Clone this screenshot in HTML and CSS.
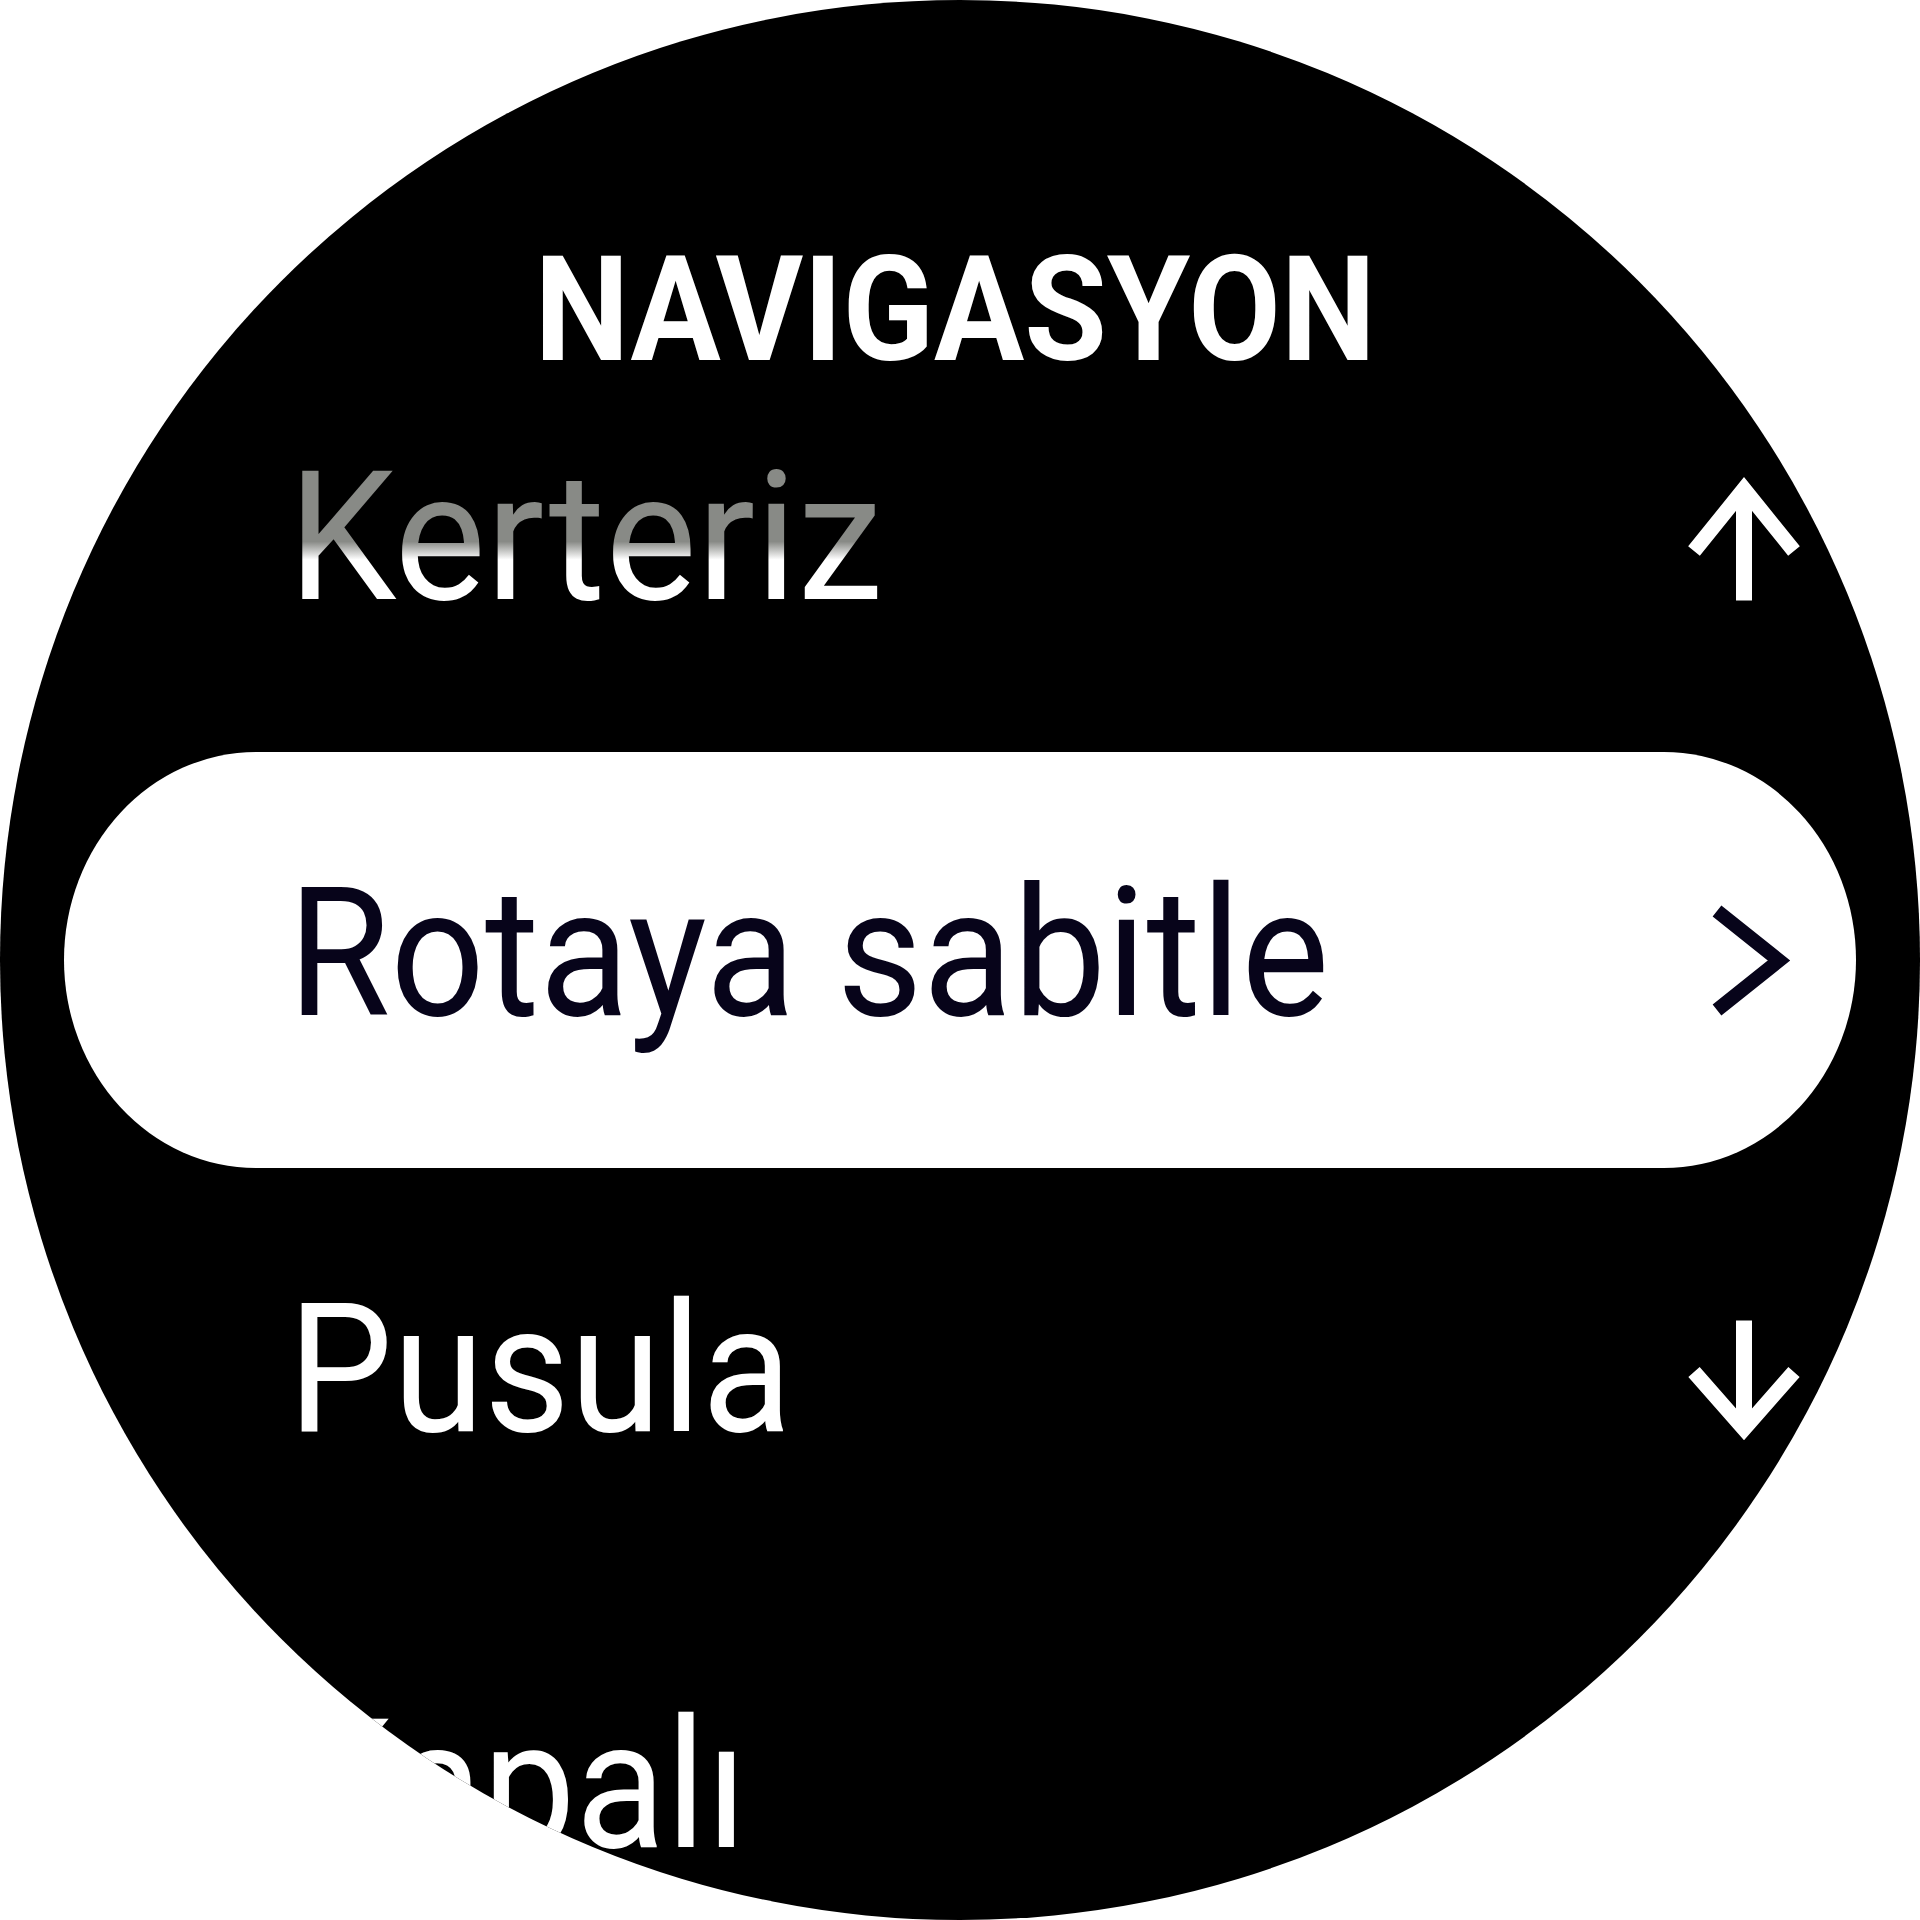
FILE: index.html
```html
<!DOCTYPE html>
<html lang="tr">
<head>
<meta charset="utf-8">
<title>Navigasyon</title>
<link rel="stylesheet" href="styles.css">
</head>
<body>
<div class="watch">
  <h1 class="title"><span class="title-text">NAVIGASYON</span></h1>
  <ul class="menu">
    <li class="item item-faded">
      <span class="label">Kerteriz</span>
      <svg class="icon" width="120" height="160" viewBox="0 0 120 160" aria-hidden="true">
        <path d="M60 34 V142.5" stroke="#fff" stroke-width="16" fill="none"/>
        <path d="M10 93 L60 31 L110 93" stroke="#fff" stroke-width="15" fill="none" stroke-linejoin="miter"/>
      </svg>
    </li>
    <li class="item item-selected">
      <span class="label">Rotaya sabitle</span>
      <svg class="icon" width="120" height="160" viewBox="0 0 120 160" aria-hidden="true">
        <path d="M33 37 L95 86.5 L33 136" stroke="#07041a" stroke-width="14" fill="none" stroke-linejoin="miter"/>
      </svg>
    </li>
    <li class="item">
      <span class="label">Pusula</span>
      <svg class="icon" width="120" height="160" viewBox="0 0 120 160" aria-hidden="true">
        <path d="M60 30.5 V134" stroke="#fff" stroke-width="16" fill="none"/>
        <path d="M10 82 L60 139 L110 82" stroke="#fff" stroke-width="15" fill="none" stroke-linejoin="miter"/>
      </svg>
    </li>
    <li class="item">
      <span class="label">Kapalı</span>
    </li>
  </ul>
</div>
</body>
</html>
```

FILE: styles.css
```css
html, body {
  margin: 0;
  padding: 0;
  background: #ffffff;
}

.watch {
  width: 1920px;
  height: 1920px;
  border-radius: 50%;
  background: #000000;
  overflow: hidden;
  font-family: Roboto, "Liberation Sans", sans-serif;
}

.title {
  margin: 0;
  padding: 286px 10px 0 0;
  height: 50px;
  line-height: 50px;
  font-size: 146px;
  font-weight: 700;
  color: #ffffff;
  text-align: center;
}

.title-text {
  display: inline-block;
  transform: scaleX(0.92);
  transform-origin: center;
}

.menu {
  list-style: none;
  margin: 0;
  padding: 0;
}

.item {
  box-sizing: border-box;
  height: 416px;
  padding: 0 116px 13px 288px;
  display: flex;
  align-items: center;
  justify-content: space-between;
  color: #ffffff;
}

.label {
  display: inline-block;
  font-size: 180px;
  font-weight: 400;
  line-height: 1;
  white-space: nowrap;
  transform: scaleX(0.922);
  transform-origin: left center;
}

.item-faded .label {
  color: transparent;
  background: linear-gradient(to bottom, #888a86 0%, #888a86 52%, #ffffff 62%, #ffffff 100%);
  -webkit-background-clip: text;
  background-clip: text;
  transform: scaleX(0.96);
}

.item-selected {
  margin: 0 64px;
  padding: 0 52px 13px 224px;
  background: #ffffff;
  border-radius: 192px / 208px;
  color: #07041a;
}

.icon {
  flex: none;
  display: block;
}
```
